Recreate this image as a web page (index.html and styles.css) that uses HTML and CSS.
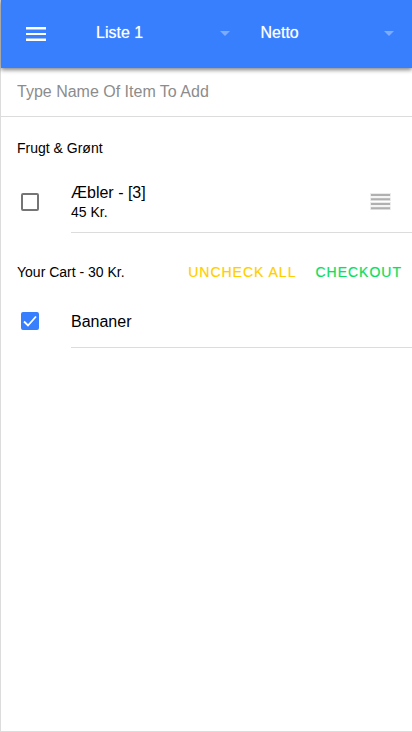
FILE: index.html
```html
<!DOCTYPE html>
<html lang="da">
<head>
<meta charset="utf-8">
<meta name="viewport" content="width=device-width, initial-scale=1">
<title>Liste 1</title>
<link rel="stylesheet" href="styles.css">
</head>
<body>
<div class="app">
  <header class="toolbar">
    <button class="menu-button" type="button" aria-label="Menu">
      <svg width="20" height="14" viewBox="0 0 20 14" fill="#fff"><path d="M0 0h20v2.400H0zM0 5.900h20v2.200H0zM0 11.600h20v2.400H0z"/></svg>
    </button>
    <div class="picker">
      <select aria-label="List"><option>Liste 1</option></select>
      <svg class="caret" width="10" height="5" viewBox="0 0 10 5"><path d="M0 0h10L5 5z" fill="#fff"/></svg>
    </div>
    <div class="picker">
      <select aria-label="Store"><option>Netto</option></select>
      <svg class="caret" width="10" height="5" viewBox="0 0 10 5"><path d="M0 0h10L5 5z" fill="#fff"/></svg>
    </div>
  </header>
  <main>
    <input class="add-item" type="text" aria-label="Item name" placeholder="Type Name Of Item To Add">
    <section class="group">
      <div class="group-head"><h2>Frugt &amp; Grønt</h2></div>
      <div class="item">
        <input class="check" type="checkbox" id="item-apples">
        <div class="item-body item-body-tall">
          <label for="item-apples"><span class="name">Æbler - [3]</span><span class="price">45 Kr.</span></label>
          <button class="handle" type="button" aria-label="Reorder">
            <svg width="21" height="18" viewBox="0 0 21 18"><path fill="#ebebeb" d="M0 0h21v3.500H0zM0 4.500h21v3.500H0zM0 9h21v3.500H0zM0 13.500h21v3.500H0z"/><path fill="#b0b0b0" d="M1 1h19v2H1zM1 5.300h19v2H1zM1 10h19v2H1zM1 14.200h19v2H1z"/></svg>
          </button>
        </div>
      </div>
    </section>
    <section class="group cart">
      <div class="group-head">
        <h2>Your Cart - 30 Kr.</h2>
        <button class="action warning" type="button">UNCHECK ALL</button>
        <button class="action success" type="button">CHECKOUT</button>
      </div>
      <div class="item">
        <input class="check" type="checkbox" id="item-bananas" checked>
        <div class="item-body">
          <label for="item-bananas"><span class="name">Bananer</span></label>
        </div>
      </div>
    </section>
  </main>
</div>
</body>
</html>
```
FILE: styles.css
```css
* { box-sizing: border-box; }

body {
  margin: 0;
  font-family: "Liberation Sans", Arial, sans-serif;
  font-size: 16px;
  color: #000;
  background: #fff;
}

button, input, select { font: inherit; margin: 0; }

button {
  border: 0;
  padding: 0;
  background: none;
  cursor: pointer;
}

svg { display: block; }

.app {
  min-height: 100vh;
  border-left: 1px solid #dcdcdc;
  border-bottom: 1px solid #dcdcdc;
}

.toolbar {
  position: relative;
  display: flex;
  align-items: center;
  height: 68px;
  padding: 0 3px 0 9px;
  background: #387ffe;
  box-shadow: 0 2px 4px rgba(0, 0, 0, 0.3), 0 1px 5px rgba(0, 0, 0, 0.3);
}

.menu-button {
  padding: 16px;
  margin-right: 18px;
}

.picker {
  position: relative;
  flex: 1;
  min-width: 0;
}

.picker select {
  display: block;
  width: 100%;
  height: 40px;
  padding: 0 32px 4px 16px;
  border: 0;
  appearance: none;
  background: none;
  color: #fff;
  text-shadow: 0 0 1px rgba(255, 255, 255, 0.6);
}

.caret {
  position: absolute;
  right: 15px;
  top: 17px;
  opacity: 0.35;
  pointer-events: none;
}

.add-item {
  display: block;
  width: 100%;
  height: 49px;
  padding: 0 16px;
  border: 0;
  border-bottom: 1px solid #dcdcdc;
  border-radius: 0;
  background: none;
}

.add-item::placeholder { color: #8c8c8c; }

.group { padding-top: 8px; }

.cart { padding-top: 16px; }

.group-head {
  display: flex;
  align-items: center;
  gap: 19px;
  height: 46px;
  padding: 0 10px 0 16px;
}

.cart .group-head { height: 45px; }

.group-head h2 {
  flex: 1;
  margin: 0;
  font-size: 14px;
  font-weight: 400;
  white-space: nowrap;
}

.action {
  font-size: 14px;
  letter-spacing: 1px;
  white-space: nowrap;
}

.warning {
  color: #ffce00;
  text-shadow: 0 0 1px rgba(255, 206, 0, 0.4);
}

.success {
  color: #10dc60;
  text-shadow: 0 0 1px rgba(16, 220, 96, 0.4);
}

.item {
  display: flex;
  align-items: center;
  padding-left: 20px;
}

.check {
  flex: none;
  width: 18px;
  height: 18px;
  margin-right: 32px;
  border: 2px solid #757575;
  border-radius: 2px;
  appearance: none;
}

.check:checked {
  border-color: #387ffe;
  background: #387ffe url("data:image/svg+xml,%3Csvg xmlns='http://www.w3.org/2000/svg' viewBox='0 0 18 18'%3E%3Cpath d='M3 9.500l4 4 8-9' fill='none' stroke='white' stroke-width='1.800'/%3E%3C/svg%3E") center / 18px 18px border-box;
}

.item-body {
  flex: 1;
  display: flex;
  align-items: center;
  justify-content: space-between;
  height: 54px;
  padding: 2px 21px 0 0;
  border-bottom: 1px solid #dcdcdc;
}

.item-body-tall {
  height: 62px;
  padding-top: 0;
}

.name, .price { display: block; }

.name {
  padding-top: 1px;
  line-height: 20px;
}

.price {
  font-size: 14px;
  line-height: 19px;
}
```
